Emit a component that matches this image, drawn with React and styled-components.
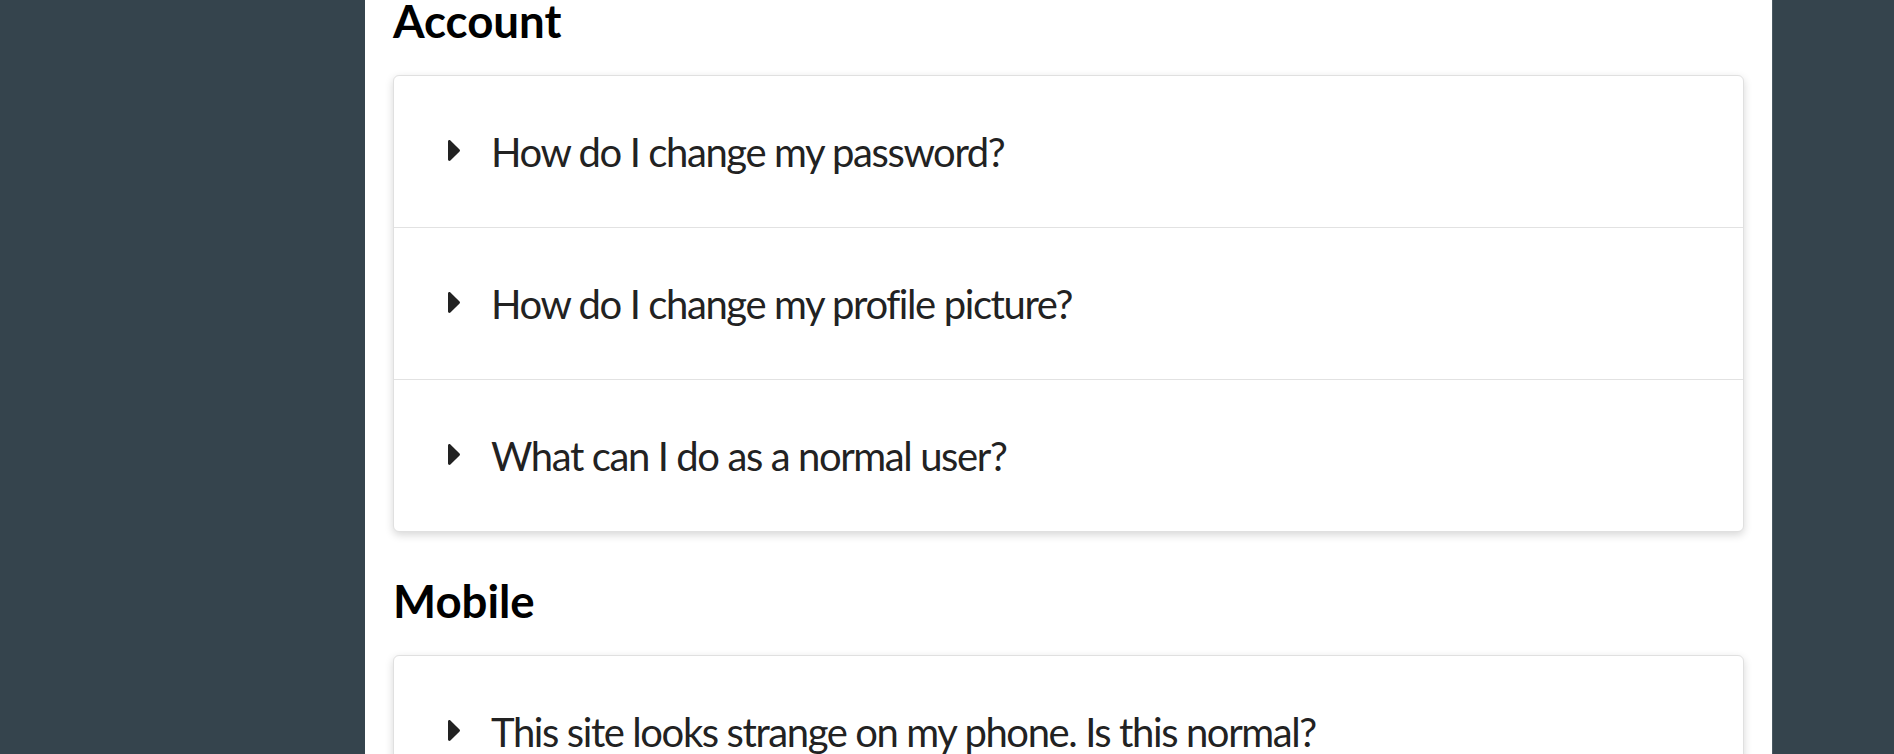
import React from "react";
import styled, { createGlobalStyle } from "styled-components";

const GlobalStyle = createGlobalStyle`
  html, body {
    margin: 0;
    padding: 0;
    background: #35444d;
    font-family: Lato, "Open Sans", sans-serif;
  }
`;

const Page = styled.div`
  display: flex;
  min-height: 754px;
  overflow: hidden;
`;

const Panel = styled.main`
  margin-left: 365px;
  width: 1408px;
  box-sizing: border-box;
  background: #ffffff;
  padding: 0 28px 40px;
  display: flex;
  flex-direction: column;
  gap: 44px;
  margin-top: -4px;
  border-right: 1px solid #4a5962;
`;

const Section = styled.section`
  display: flex;
  flex-direction: column;
  gap: 31px;
`;

const Heading = styled.h2`
  margin: 0;
  padding-top: 2px;
  font-family: Lato, sans-serif;
  font-weight: 700;
  font-size: 45.6px;
  line-height: 46px;
  color: #000;
`;

const Card = styled.div`
  background: #fff;
  border: 1px solid #e0e0e0;
  border-radius: 6px;
  box-shadow: 0 3px 8px rgba(0, 0, 0, 0.16);
  display: flex;
  flex-direction: column;
`;

const Row = styled.div`
  height: 151px;
  display: flex;
  align-items: center;
  gap: 31px;
  padding-left: 54px;
  border-top: ${(p) => (p.$first ? "none" : "1px solid #e2e2e2")};
`;

const Question = styled.span`
  font-family: Lato, sans-serif;
  font-size: 40px;
  line-height: 48px;
  letter-spacing: -1.4px;
  color: #222;
`;

const Caret = styled.svg`
  width: 12px;
  height: 21px;
  flex: none;
  margin-top: -2px;
  fill: #222;
`;

const CaretIcon = () => (
  <Caret viewBox="0 107 169 298" preserveAspectRatio="none">
    <path d="M0 384.662V127.338c0-17.818 21.543-26.741 34.142-14.142l128.662 128.662c7.81 7.81 7.81 20.474 0 28.284L34.142 398.804C21.543 411.404 0 402.48 0 384.662z" />
  </Caret>
);

const sections = [
  {
    title: "Account",
    items: [
      "How do I change my password?",
      "How do I change my profile picture?",
      "What can I do as a normal user?",
    ],
  },
  {
    title: "Mobile",
    items: ["This site looks strange on my phone. Is this normal?"],
  },
];

export default function App() {
  return (
    <>
      <GlobalStyle />
      <Page>
        <Panel>
          {sections.map((s) => (
            <Section key={s.title}>
              <Heading>{s.title}</Heading>
              <Card>
                {s.items.map((q, i) => (
                  <Row key={q} $first={i === 0}>
                    <CaretIcon />
                    <Question>{q}</Question>
                  </Row>
                ))}
              </Card>
            </Section>
          ))}
        </Panel>
      </Page>
    </>
  );
}
